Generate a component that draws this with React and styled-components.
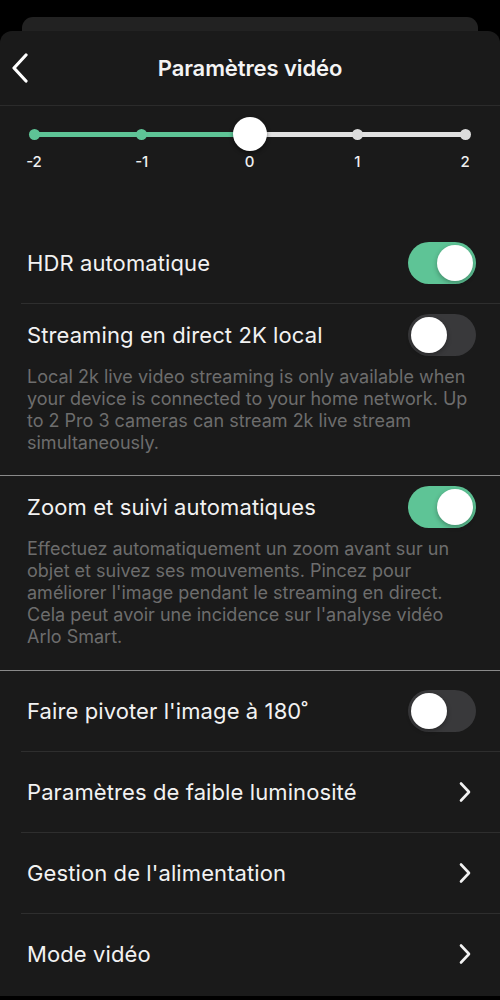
import React from 'react';
import styled, { createGlobalStyle } from 'styled-components';

const Global = createGlobalStyle`
  html, body { margin: 0; padding: 0; background: #000; }
  body { font-family: Inter, "Noto Sans", "Liberation Sans", sans-serif; -webkit-font-smoothing: antialiased; }
  * { box-sizing: border-box; }
`;

const GREEN = '#5ec496';

const Screen = styled.div`
  width: 500px;
  height: 1000px;
  display: flex;
  flex-direction: column;
  padding-top: 17px;
  padding-bottom: 4px;
  background: #000;
  overflow: hidden;
`;

const BackCard = styled.div`
  flex-shrink: 0;
  height: 14px;
  margin: 0 22px;
  background: #222222;
  border-radius: 11px 11px 0 0;
`;

const Sheet = styled.div`
  flex: 1;
  display: flex;
  flex-direction: column;
  background: #1a1a1a;
  border-radius: 12px 12px 0 0;
  overflow: hidden;
`;

const Header = styled.header`
  height: 75px;
  flex-shrink: 0;
  display: grid;
  grid-template-columns: 60px 1fr 60px;
  align-items: center;
  border-bottom: 1px solid #2b2b2b;
`;

const BackBtn = styled.button`
  background: none;
  border: 0;
  padding: 0 0 0 10px;
  height: 100%;
  display: flex;
  align-items: center;
  cursor: pointer;
`;

const Title = styled.h1`
  margin: 0;
  text-align: center;
  color: #f4f4f4;
  font-size: 22px;
  font-weight: 600;
  letter-spacing: -0.1px;
`;

const SliderSection = styled.section`
  height: 117px;
  flex-shrink: 0;
  padding-top: 11px;
`;

const TrackArea = styled.div`
  position: relative;
  height: 34px;
  margin: 0 35px 0 34px;
`;

const TrackLine = styled.div`
  position: absolute;
  left: 0;
  right: 0;
  top: 15px;
  height: 5px;
  border-radius: 3px;
  background: #e1e1e1;
`;

const TrackFill = styled.div`
  position: absolute;
  left: 0;
  top: 15px;
  height: 5px;
  border-radius: 3px;
  background: ${GREEN};
`;

const Dot = styled.div`
  position: absolute;
  top: 12px;
  width: 11px;
  height: 11px;
  margin-left: -5.5px;
  border-radius: 50%;
  background: ${p => (p.$active ? GREEN : '#dcdcdc')};
`;

const Thumb = styled.div`
  position: absolute;
  top: 0;
  width: 34px;
  height: 34px;
  margin-left: -17px;
  border-radius: 50%;
  background: #fff;
  box-shadow: 0 2px 4px rgba(0, 0, 0, 0.45);
`;

const Labels = styled.div`
  display: flex;
  justify-content: space-between;
  margin: 2px 25px 0 24px;
`;

const Label = styled.span`
  width: 20px;
  text-align: center;
  color: #f0f0f0;
  font-size: 15px;
  line-height: 18px;
  font-weight: 500;
`;

const Group = styled.div`
  border-bottom: ${p => (p.$strong ? '1px solid #8a8a8a' : 'none')};
  padding-bottom: ${p => p.$pb || 0}px;
`;

const Row = styled.div`
  height: ${p => p.$h || 80}px;
  display: flex;
  align-items: center;
  justify-content: space-between;
  padding: 0 24px 0 27px;
`;

const Divider = styled.div`
  height: 1px;
  margin-left: 21px;
  background: #2e2e2e;
`;

const RowLabel = styled.span`
  color: #f2f2f2;
  font-size: 22px;
  font-weight: 400;
  letter-spacing: 0.1px;
`;

const Description = styled.p`
  margin: 0;
  padding: 0 24px 0 27px;
  color: #6d6d6d;
  font-size: 18px;
  line-height: 22px;
`;

const Track = styled.div`
  width: 68px;
  height: 42px;
  border-radius: 21px;
  padding: 3px;
  display: flex;
  justify-content: ${p => (p.$on ? 'flex-end' : 'flex-start')};
  background: ${p => (p.$on ? GREEN : '#39393b')};
  flex-shrink: 0;
`;

const Knob = styled.div`
  width: 36px;
  height: 36px;
  border-radius: 50%;
  background: #fff;
  box-shadow: 0 2px 5px rgba(0, 0, 0, 0.3);
`;

const ChevronWrap = styled.span`
  display: flex;
  align-items: center;
  margin-right: 3px;
`;

const Toggle = ({ on }) => (
  <Track $on={on}>
    <Knob />
  </Track>
);

const Chevron = () => (
  <ChevronWrap>
    <svg width="15" height="22" viewBox="0 0 15 22" fill="none">
      <path d="M3 2.5 L11 11 L3 19.5" stroke="#f2f2f2" strokeWidth="2.6" strokeLinecap="round" strokeLinejoin="round" />
    </svg>
  </ChevronWrap>
);

const steps = [-2, -1, 0, 1, 2];
const value = 0;

export default function App() {
  const idx = steps.indexOf(value);
  const pct = (idx / (steps.length - 1)) * 100;
  return (
    <>
      <Global />
      <Screen>
        <BackCard />
        <Sheet>
          <Header>
            <BackBtn aria-label="Retour">
              <svg width="22" height="30" viewBox="0 0 22 30" fill="none">
                <path d="M16 2 L4 15 L16 28" stroke="#fff" strokeWidth="3.2" strokeLinecap="round" strokeLinejoin="round" />
              </svg>
            </BackBtn>
            <Title>Paramètres vidéo</Title>
            <span />
          </Header>

          <SliderSection>
            <TrackArea>
              <TrackLine />
              <TrackFill style={{ width: `${pct}%` }} />
              {steps.map((s, i) => (
                <Dot key={s} $active={i <= idx} style={{ left: `${(i / (steps.length - 1)) * 100}%` }} />
              ))}
              <Thumb style={{ left: `${pct}%` }} />
            </TrackArea>
            <Labels>
              {steps.map(s => (
                <Label key={s}>{s}</Label>
              ))}
            </Labels>
          </SliderSection>

          <Group>
            <Row>
              <RowLabel>HDR automatique</RowLabel>
              <Toggle on />
            </Row>
            <Divider />
          </Group>

          <Group $strong $pb={21}>
            <Row $h={62}>
              <RowLabel>Streaming en direct 2K local</RowLabel>
              <Toggle on={false} />
            </Row>
            <Description>
              Local 2k live video streaming is only available when your device is connected to your home network. Up to 2 Pro 3 cameras can stream 2k live stream simultaneously.
            </Description>
          </Group>

          <Group $strong $pb={22}>
            <Row $h={62}>
              <RowLabel>Zoom et suivi automatiques</RowLabel>
              <Toggle on />
            </Row>
            <Description>
              Effectuez automatiquement un zoom avant sur un objet et suivez ses mouvements. Pincez pour améliorer l'image pendant le streaming en direct. Cela peut avoir une incidence sur l'analyse vidéo Arlo Smart.
            </Description>
          </Group>

          <Group>
            <Row>
              <RowLabel>Faire pivoter l'image à 180˚</RowLabel>
              <Toggle on={false} />
            </Row>
            <Divider />
          </Group>

          <Group>
            <Row>
              <RowLabel>Paramètres de faible luminosité</RowLabel>
              <Chevron />
            </Row>
            <Divider />
          </Group>

          <Group>
            <Row>
              <RowLabel>Gestion de l'alimentation</RowLabel>
              <Chevron />
            </Row>
            <Divider />
          </Group>

          <Group>
            <Row>
              <RowLabel>Mode vidéo</RowLabel>
              <Chevron />
            </Row>
          </Group>
        </Sheet>
      </Screen>
    </>
  );
}
